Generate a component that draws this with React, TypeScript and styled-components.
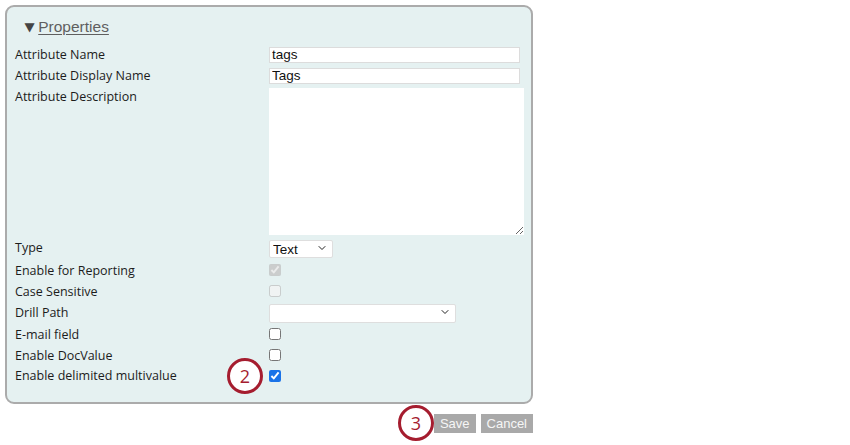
import React from 'react';
import styled, { createGlobalStyle } from 'styled-components';
import { ChevronDown } from 'lucide-react';

const GlobalStyle = createGlobalStyle`
  html, body {
    margin: 0;
    padding: 0;
    background: #ffffff;
  }
  body {
    font-family: "Open Sans", "Liberation Sans", sans-serif;
  }
`;

const Page = styled.div`
  width: 528px;
  padding: 5px;
`;

const Panel = styled.section`
  box-sizing: border-box;
  height: 399px;
  border: 2px solid #ababab;
  border-radius: 9px;
  background: #e5f1f1;
  padding: 0 10px 0 8px;
`;

const Header = styled.div`
  display: flex;
  align-items: center;
  height: 37px;
  padding: 3px 0 0 10px;
  box-sizing: border-box;
`;

const Caret = styled.span`
  font-family: "DejaVu Sans", sans-serif;
  font-size: 12px;
  color: #444;
  margin-right: 4px;
  transform: scaleX(1.1);
`;

const Title = styled.a`
  font-family: "Liberation Sans", Arial, sans-serif;
  font-size: 15.5px;
  color: #5f5f5f;
  text-decoration: underline;
  text-underline-offset: 2px;
  cursor: pointer;
`;

const Row = styled.div<{ $h: number; $top?: boolean }>`
  display: grid;
  grid-template-columns: 254px 1fr;
  align-items: ${p => (p.$top ? 'start' : 'center')};
  height: ${p => p.$h}px;
`;

const Label = styled.label<{ $pad?: number }>`
  font-size: 12.5px;
  line-height: 17px;
  color: #1c1c1c;
  padding-top: ${p => p.$pad || 0}px;
`;

const Control = styled.div`
  position: relative;
  display: flex;
  align-items: center;
`;

const TextInput = styled.input`
  box-sizing: border-box;
  width: 251px;
  height: 16px;
  padding: 0 2px;
  border: 1px solid #dcdcdc;
  background: #fff;
  font-family: "Liberation Sans", Arial, sans-serif;
  font-size: 13.5px;
  color: #111;
  outline: none;
`;

const TextArea = styled.textarea`
  box-sizing: border-box;
  width: 255px;
  height: 147px;
  margin: 2px 0 0;
  border: none;
  background: #fff;
  font-family: "Liberation Sans", Arial, sans-serif;
  font-size: 13px;
  outline: none;
`;

const SelectWrap = styled.div<{ $w: number }>`
  position: relative;
  width: ${p => p.$w}px;
`;

const Select = styled.select<{ $h: number }>`
  appearance: none;
  box-sizing: border-box;
  width: 100%;
  height: ${p => p.$h}px;
  padding: 0 20px 0 3px;
  border: 1px solid #dedede;
  border-radius: 2px;
  background: #fff;
  font-family: "Liberation Sans", Arial, sans-serif;
  font-size: 13.5px;
  color: #111;
  outline: none;
`;

const Chevron = styled(ChevronDown)`
  position: absolute;
  right: 5px;
  top: 50%;
  transform: translateY(-50%);
  pointer-events: none;
  color: #222;
`;

const Check = styled.input`
  width: 12px;
  height: 12px;
  margin: 0;
  accent-color: #1a73e8;
`;

const Callout = styled.span<{ $out?: boolean }>`
  box-sizing: border-box;
  width: 36px;
  height: 36px;
  border: 3px solid #a51d2f;
  border-radius: 50%;
  display: flex;
  align-items: center;
  justify-content: center;
  background: #fff;
  font-family: "Open Sans", "Liberation Sans", sans-serif;
  font-size: 18px;
  color: #a51d2f;
  ${p =>
    p.$out
      ? `position: absolute; right: calc(100% + 6px); top: 50%; transform: translateY(-50%);`
      : ''}
`;

const Actions = styled.div`
  display: flex;
  justify-content: flex-end;
  align-items: center;
  gap: 5px;
  height: 38px;
`;

const CalloutSlot = styled.div`
  margin-right: -5px;
`;

const Button = styled.button`
  height: 19px;
  padding: 0 6px;
  border: none;
  background: #a9a9a9;
  color: #f6f6f6;
  font-family: "Liberation Sans", Arial, sans-serif;
  font-size: 13px;
  cursor: pointer;
`;

export default function App() {
  return (
    <Page>
      <GlobalStyle />
      <Panel>
        <Header>
          <Caret>▼</Caret>
          <Title>Properties</Title>
        </Header>

        <Row $h={21}>
          <Label>Attribute Name</Label>
          <Control>
            <TextInput defaultValue="tags" />
          </Control>
        </Row>
        <Row $h={21}>
          <Label>Attribute Display Name</Label>
          <Control>
            <TextInput defaultValue="Tags" />
          </Control>
        </Row>
        <Row $h={150} $top>
          <Label $pad={2}>Attribute Description</Label>
          <Control>
            <TextArea />
          </Control>
        </Row>
        <Row $h={23}>
          <Label>Type</Label>
          <Control>
            <SelectWrap $w={64}>
              <Select $h={18} defaultValue="Text">
                <option>Text</option>
                <option>Number</option>
                <option>Date</option>
              </Select>
              <Chevron size={12} strokeWidth={2} />
            </SelectWrap>
          </Control>
        </Row>
        <Row $h={22}>
          <Label>Enable for Reporting</Label>
          <Control>
            <Check type="checkbox" defaultChecked disabled />
          </Control>
        </Row>
        <Row $h={20}>
          <Label>Case Sensitive</Label>
          <Control>
            <Check type="checkbox" disabled />
          </Control>
        </Row>
        <Row $h={22}>
          <Label>Drill Path</Label>
          <Control>
            <SelectWrap $w={187}>
              <Select $h={19} defaultValue="">
                <option value=""></option>
              </Select>
              <Chevron size={12} strokeWidth={2} />
            </SelectWrap>
          </Control>
        </Row>
        <Row $h={22}>
          <Label>E-mail field</Label>
          <Control>
            <Check type="checkbox" />
          </Control>
        </Row>
        <Row $h={20}>
          <Label>Enable DocValue</Label>
          <Control>
            <Check type="checkbox" />
          </Control>
        </Row>
        <Row $h={21}>
          <Label>Enable delimited multivalue</Label>
          <Control>
            <Callout $out>2</Callout>
            <Check type="checkbox" defaultChecked />
          </Control>
        </Row>
      </Panel>

      <Actions>
        <CalloutSlot>
          <Callout>3</Callout>
        </CalloutSlot>
        <Button>Save</Button>
        <Button>Cancel</Button>
      </Actions>
    </Page>
  );
}
